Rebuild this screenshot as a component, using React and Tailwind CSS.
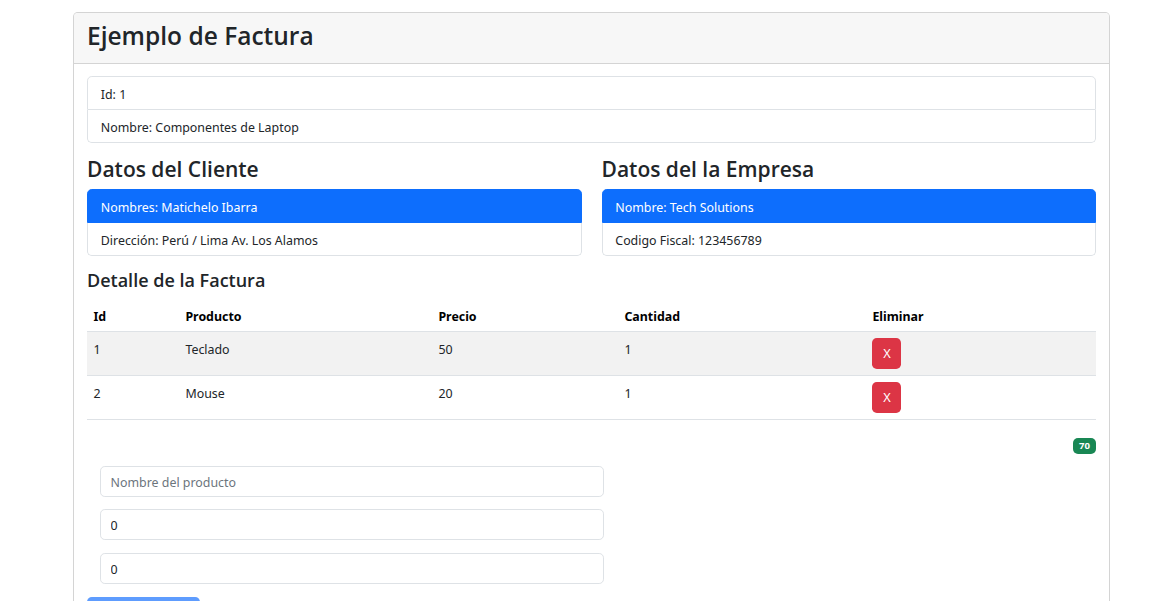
const items = [
  { id: 1, producto: "Teclado", precio: 50, cantidad: 1 },
  { id: 2, producto: "Mouse", precio: 20, cantidad: 1 },
];

const ListItem = ({ children, active, first, last }) => (
  <li
    className={`px-[12.8px] pt-[7.8px] pb-[5px] leading-[19.2px] border ${
      active ? "bg-[#0d6efd] border-[#0d6efd] text-white" : "bg-white border-[#dee2e6] text-[#212529]"
    } ${first ? "rounded-t-[4.8px]" : "border-t-0"} ${last ? "rounded-b-[4.8px]" : ""}`}
  >
    {children}
  </li>
);

const Input = ({ placeholder, value }) => (
  <input
    readOnly
    placeholder={placeholder}
    value={value}
    className="block w-full h-[31px] px-[9.6px] pt-[2px] border border-[#dee2e6] rounded-[4.8px] text-[12.4px] text-[#212529] placeholder:text-[#6c757d] bg-white outline-none"
  />
);

const heading = "font-['Open_Sans','Noto_Sans',sans-serif] font-semibold text-[#212529]";
const cell = "px-[6.4px] pt-[7.8px] pb-[5px] leading-[19.2px] align-top";

export default function App() {
  return (
    <div className="min-h-[601px] bg-white font-['Noto_Sans','Open_Sans',sans-serif] text-[12.4px] text-[#212529] pt-[12px] pl-[73px] pr-[64px]">
      <div className="border border-[#d4d4d4] rounded-[4.8px] border-b-0 rounded-b-none">
        <div className="bg-[#f7f7f7] border-b border-[#d4d4d4] px-[13px] pt-[7px] pb-[12px] rounded-t-[4px]">
          <h2 className={`${heading} text-[24.5px] leading-[31px]`}>Ejemplo de Factura</h2>
        </div>
        <div className="px-[13px] pt-[12px] pb-[4px]">
          <ul>
            <ListItem first>Id: 1</ListItem>
            <ListItem last>Nombre: Componentes de Laptop</ListItem>
          </ul>

          <div className="grid grid-cols-2 gap-x-[20px] mt-[13px]">
            <div>
              <h3 className={`${heading} text-[21px] leading-[27px] mb-[6px]`}>Datos del Cliente</h3>
              <ul>
                <ListItem first active>Nombres: Matichelo Ibarra</ListItem>
                <ListItem last>Dirección: Perú / Lima Av. Los Alamos</ListItem>
              </ul>
            </div>
            <div>
              <h3 className={`${heading} text-[21px] leading-[27px] mb-[6px]`}>Datos del la Empresa</h3>
              <ul>
                <ListItem first active>Nombre: Tech Solutions</ListItem>
                <ListItem last>Codigo Fiscal: 123456789</ListItem>
              </ul>
            </div>
          </div>

          <h4 className={`${heading} text-[18px] leading-[23px] mt-[13px] mb-[7px]`}>Detalle de la Factura</h4>
          <table className="w-full border-collapse text-left">
            <thead>
              <tr className="border-b border-[#dee2e6]">
                <th className={`w-[92px] ${cell} font-bold text-black`}>Id</th>
                <th className={`w-[253px] ${cell} font-bold text-black`}>Producto</th>
                <th className={`w-[186px] ${cell} font-bold text-black`}>Precio</th>
                <th className={`w-[248px] ${cell} font-bold text-black`}>Cantidad</th>
                <th className={`${cell} font-bold text-black`}>Eliminar</th>
              </tr>
            </thead>
            <tbody>
              {items.map((item, i) => (
                <tr key={item.id} className={`border-b border-[#dee2e6] ${i % 2 === 0 ? "bg-[#f2f2f2]" : "bg-white"}`}>
                  <td className={cell}>{item.id}</td>
                  <td className={cell}>{item.producto}</td>
                  <td className={cell}>{item.precio}</td>
                  <td className={cell}>{item.cantidad}</td>
                  <td className="px-[6.4px] pt-[6.4px] pb-[5.6px] align-top">
                    <button className="block h-[31px] w-[29px] bg-[#dc3545] text-white rounded-[4.8px] leading-[19.2px] text-[12.8px]">X</button>
                  </td>
                </tr>
              ))}
            </tbody>
          </table>

          <div className="flex justify-end mt-[18px]">
            <span className="bg-[#198754] text-white text-[9.6px] font-bold leading-[16px] px-[6px] rounded-[5px]">70</span>
          </div>

          <div className="w-[504px] ml-[13px] mt-[12px] flex flex-col gap-[12.5px]">
            <Input placeholder="Nombre del producto" value="" />
            <Input value="0" />
            <Input value="0" />
          </div>

          <button className="mt-[13.5px] w-[113px] h-[31px] rounded-[4.8px] bg-[#5e9cfe] text-white">Crear Item</button>
        </div>
      </div>
    </div>
  );
}
